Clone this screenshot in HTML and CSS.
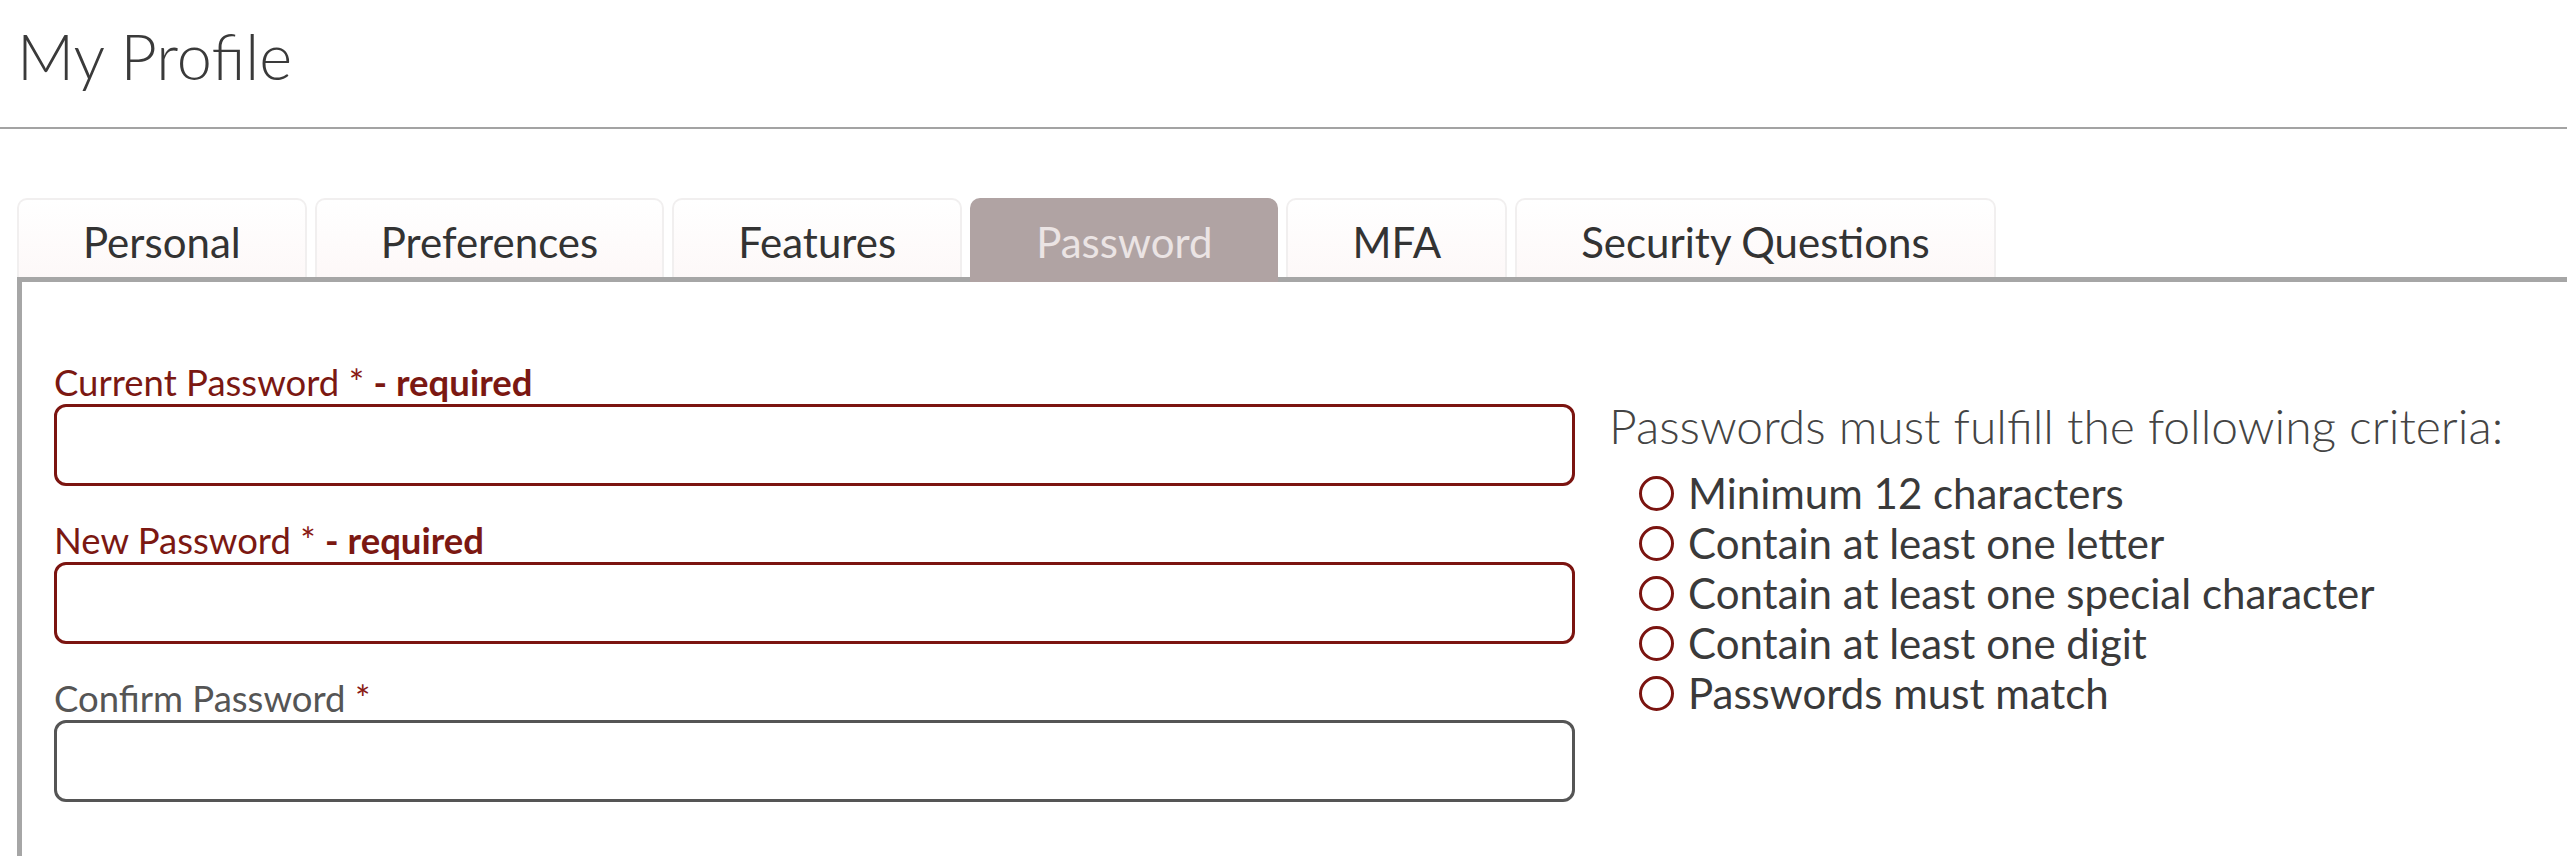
FILE: index.html
```html
<!DOCTYPE html>
<html lang="en">
<head>
  <meta charset="UTF-8" />
  <meta name="viewport" content="width=device-width, initial-scale=1.0"/>
  <title>My Profile</title>
  <link rel="stylesheet" href="styles.css">
</head>
<body>
  <header class="page-header">
    <h1>My Profile</h1>
  </header>

  <main class="profile">
    <ul class="tabs">
      <li class="tab">Personal</li>
      <li class="tab">Preferences</li>
      <li class="tab">Features</li>
      <li class="tab active">Password</li>
      <li class="tab">MFA</li>
      <li class="tab">Security Questions</li>
    </ul>

    <section class="tab-panel">
      <form class="pw-form">
        <div class="field invalid">
          <label for="current">Current Password <span class="star">*</span> <strong>- required</strong></label>
          <input id="current" type="password">
        </div>
        <div class="field invalid">
          <label for="newpw">New Password <span class="star">*</span> <strong>- required</strong></label>
          <input id="newpw" type="password">
        </div>
        <div class="field">
          <label for="confirm">Confirm Password <span class="star">*</span></label>
          <input id="confirm" type="password">
        </div>
      </form>

      <div class="criteria">
        <h3>Passwords must fulfill the following criteria:</h3>
        <ul>
          <li><span class="dot"></span>Minimum 12 characters</li>
          <li><span class="dot"></span>Contain at least one letter</li>
          <li><span class="dot"></span>Contain at least one special character</li>
          <li><span class="dot"></span>Contain at least one digit</li>
          <li><span class="dot"></span>Passwords must match</li>
        </ul>
      </div>
    </section>
  </main>
</body>
</html>
```

FILE: styles.css
```css
html, body {
  margin: 0;
  padding: 0;
  font-family: 'Lato', 'Liberation Sans', sans-serif;
  color: #333;
  background: #fff;
  overflow: hidden;
}

.page-header {
  border-bottom: 2px solid #a3a3a3;
  padding: 18px 17px 34px;
}

.page-header h1 {
  margin: 0;
  font-size: 63px;
  font-weight: 300;
  color: #3a3a3a;
}

.profile {
  padding: 69px 0 0 17px;
}

.tabs {
  list-style: none;
  margin: 0;
  padding: 0;
  display: flex;
  gap: 8px;
}

.tab {
  font-size: 42px;
  padding: 17px 64px 10px;
  border: 2px solid #f1efef;
  border-bottom: none;
  border-radius: 10px 10px 0 0;
  background: linear-gradient(#fff, #fdf8f8);
  color: #333;
}

.tab.active {
  background: #b0a3a3;
  border-color: #b0a3a3;
  color: #ebe4e4;
  margin-bottom: -5px;
  padding-bottom: 15px;
  position: relative;
}

.tab-panel {
  border-top: 5px solid #a6a6a6;
  border-left: 5px solid #a6a6a6;
  min-height: 700px;
  padding-left: 32px;
  display: flex;
  gap: 34px;
}

.pw-form {
  width: 1521px;
  padding-top: 79px;
}

.field {
  margin-bottom: 33px;
}

.field label {
  display: block;
  font-size: 36.5px;
  line-height: 43px;
  color: #555;
}

.field .star {
  color: #8a1a14;
}

.field input {
  display: block;
  box-sizing: border-box;
  width: 100%;
  height: 82px;
  border: 3px solid #555;
  border-radius: 12px;
  font-size: 34px;
  padding: 0 16px;
  outline: none;
}

.field.invalid label {
  color: #7b1812;
}

.field.invalid input {
  border-color: #7b1410;
}

.criteria {
  padding-top: 115px;
}

.criteria h3 {
  margin: 0 0 14px;
  font-size: 48px;
  font-weight: 300;
  color: #444;
}

.criteria ul {
  list-style: none;
  margin: 0;
  padding: 0 0 0 30px;
}

.criteria li {
  display: flex;
  align-items: center;
  gap: 14px;
  font-size: 42px;
  color: #3a3a3a;
}

.dot {
  width: 35px;
  height: 35px;
  box-sizing: border-box;
  border: 3px solid #7b1410;
  border-radius: 50%;
  flex: none;
}
```
